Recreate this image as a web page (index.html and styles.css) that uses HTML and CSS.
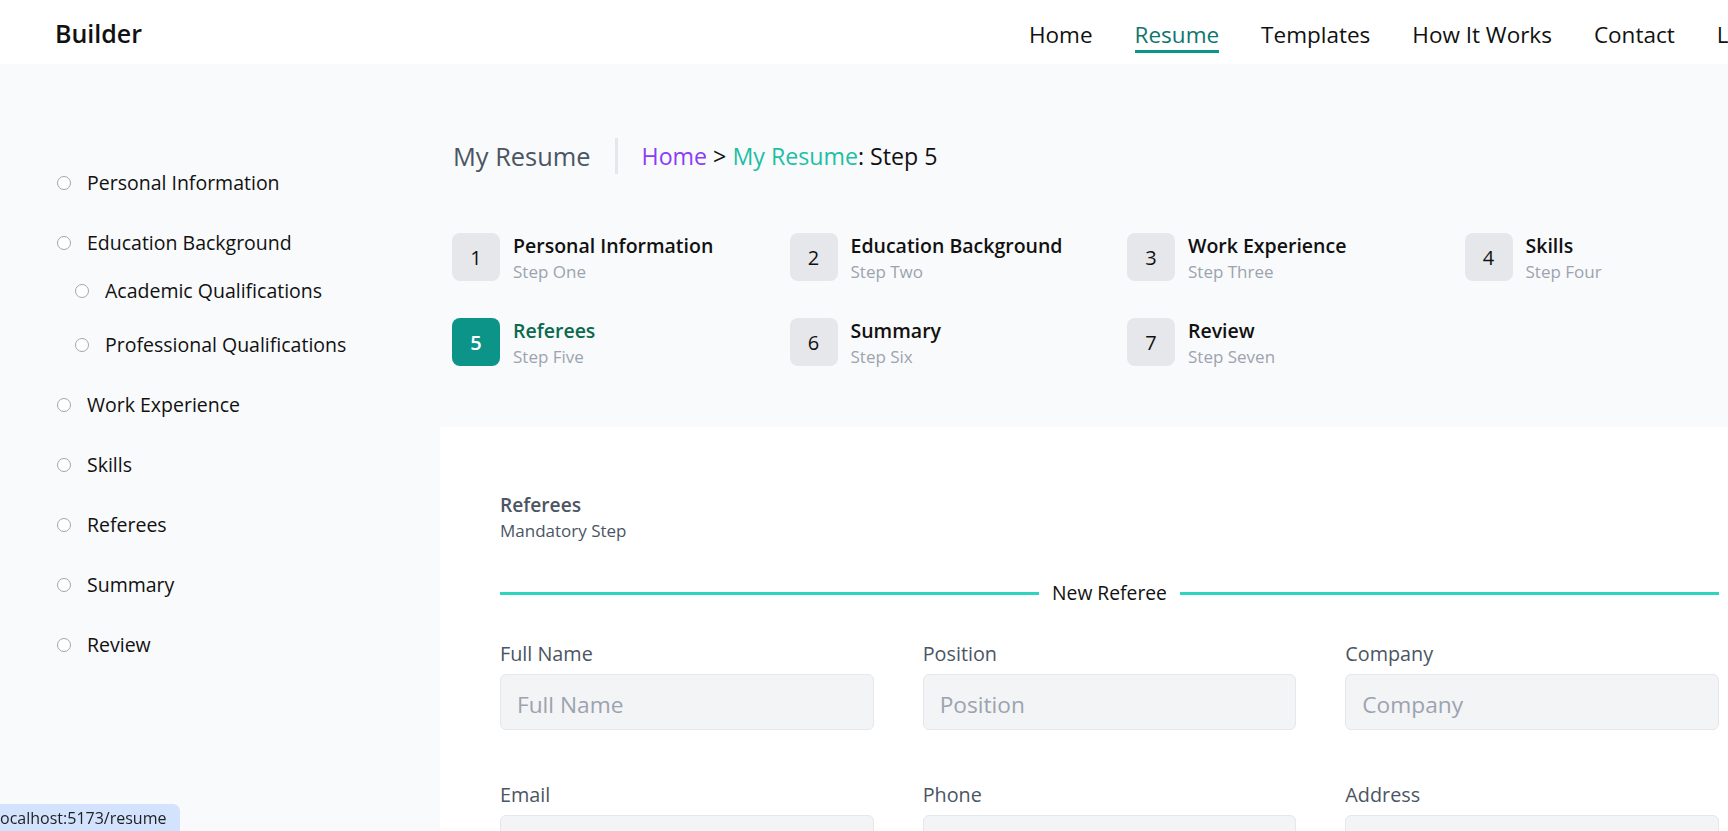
FILE: index.html
```html
<!DOCTYPE html>
<html lang="en">
<head>
<meta charset="utf-8">
<title>Resume Builder</title>
<link rel="stylesheet" href="styles.css">
</head>
<body>
<header class="topbar">
  <div class="brand">Builder</div>
  <nav class="nav">
    <a class="nav-link" href="#">Home</a>
    <a class="nav-link active" href="#">Resume</a>
    <a class="nav-link" href="#">Templates</a>
    <a class="nav-link" href="#">How It Works</a>
    <a class="nav-link" href="#">Contact</a>
    <a class="nav-link" href="#">Login</a>
  </nav>
</header>
<div class="layout">
  <aside class="sidebar">
    <ul class="toc">
      <li><div class="toc-row"><span class="dot"></span>Personal Information</div></li>
      <li><div class="toc-row"><span class="dot"></span>Education Background</div>
        <ul class="toc-sub">
          <li><div class="toc-row"><span class="dot"></span>Academic Qualifications</div></li>
          <li><div class="toc-row"><span class="dot"></span>Professional Qualifications</div></li>
        </ul>
      </li>
      <li><div class="toc-row"><span class="dot"></span>Work Experience</div></li>
      <li><div class="toc-row"><span class="dot"></span>Skills</div></li>
      <li><div class="toc-row"><span class="dot"></span>Referees</div></li>
      <li><div class="toc-row"><span class="dot"></span>Summary</div></li>
      <li><div class="toc-row"><span class="dot"></span>Review</div></li>
    </ul>
  </aside>
  <main class="main">
    <div class="crumbs">
      <span class="crumbs-title">My Resume</span>
      <span class="crumbs-sep"></span>
      <span class="crumbs-trail"><span class="purple">Home</span> &gt; <span class="teal">My Resume</span>: Step 5</span>
    </div>
    <ol class="steps">
      <li class="step"><span class="step-num">1</span><div><div class="step-title">Personal Information</div><div class="step-sub">Step One</div></div></li>
      <li class="step"><span class="step-num">2</span><div><div class="step-title">Education Background</div><div class="step-sub">Step Two</div></div></li>
      <li class="step"><span class="step-num">3</span><div><div class="step-title">Work Experience</div><div class="step-sub">Step Three</div></div></li>
      <li class="step"><span class="step-num">4</span><div><div class="step-title">Skills</div><div class="step-sub">Step Four</div></div></li>
      <li class="step current"><span class="step-num">5</span><div><div class="step-title">Referees</div><div class="step-sub">Step Five</div></div></li>
      <li class="step"><span class="step-num">6</span><div><div class="step-title">Summary</div><div class="step-sub">Step Six</div></div></li>
      <li class="step"><span class="step-num">7</span><div><div class="step-title">Review</div><div class="step-sub">Step Seven</div></div></li>
    </ol>
    <section class="panel">
      <div class="form-head">
        <h2>Referees</h2>
        <p>Mandatory Step</p>
      </div>
      <div class="divider">New Referee</div>
      <div class="fields">
        <div class="field"><label>Full Name</label><input type="text" placeholder="Full Name"></div>
        <div class="field"><label>Position</label><input type="text" placeholder="Position"></div>
        <div class="field"><label>Company</label><input type="text" placeholder="Company"></div>
        <div class="field"><label>Email</label><input type="text" placeholder="Email"></div>
        <div class="field"><label>Phone</label><input type="text" placeholder="Phone"></div>
        <div class="field"><label>Address</label><input type="text" placeholder="Address"></div>
      </div>
    </section>
  </main>
</div>
<div class="status"><span>localhost:5173/resume</span></div>
</body>
</html>
```
FILE: styles.css
```css
html {
  overflow: hidden;
}
body {
  margin: 0;
  width: 1779px;
  font-family: "Open Sans", "Noto Sans", sans-serif;
  color: #111;
  background: #f9fafb;
}

/* top bar */
.topbar {
  height: 64px;
  background: #fff;
  display: flex;
  align-items: flex-start;
  padding-left: 55px;
}
.brand {
  width: 974px;
  flex: none;
  font-size: 25px;
  font-weight: 600;
  line-height: 32px;
  padding-top: 17px;
}
.nav {
  display: flex;
  gap: 42px;
  flex: none;
}
.nav-link {
  display: block;
  padding-top: 19px;
  line-height: 31px;
  font-size: 22.5px;
  color: #111;
  text-decoration: none;
  border-bottom: 3px solid transparent;
  white-space: nowrap;
}
.nav-link.active {
  color: #0f766e;
  border-bottom-color: #0d9488;
}

/* layout */
.layout {
  display: flex;
}
.sidebar {
  width: 440px;
  flex: none;
  box-sizing: border-box;
  padding: 106px 0 0 57px;
}
.toc, .toc-sub {
  list-style: none;
  margin: 0;
  padding: 0;
}
.toc > li {
  margin-bottom: 34px;
}
.toc-sub {
  margin-top: 22px;
  padding-left: 18px;
}
.toc-sub > li + li {
  margin-top: 28px;
}
.toc-row {
  display: flex;
  align-items: center;
  gap: 16px;
  font-size: 19.5px;
  line-height: 26px;
  color: #111;
}
.dot {
  width: 14px;
  height: 14px;
  box-sizing: border-box;
  border: 1px solid #a1a6b0;
  border-radius: 50%;
  background: #fff;
  flex: none;
}

.main {
  width: 1339px;
  flex: none;
}

/* breadcrumb */
.crumbs {
  display: flex;
  align-items: center;
  height: 36px;
  margin: 74px 0 0 13px;
}
.crumbs-title {
  font-size: 25.4px;
  color: #4b5563;
}
.crumbs-sep {
  width: 3px;
  align-self: stretch;
  background: #e5e7eb;
  margin: 0 24px;
}
.crumbs-trail {
  font-size: 23.2px;
  color: #111;
}
.purple { color: #8b3cf4; }
.teal { color: #1dbfa5; }

/* steps */
.steps {
  list-style: none;
  margin: 59px 12px 0 12px;
  padding: 0;
  display: grid;
  grid-template-columns: repeat(4, 1fr);
  column-gap: 35px;
  row-gap: 34px;
}
.step {
  display: flex;
  gap: 13px;
}
.step-num {
  width: 48px;
  height: 48px;
  flex: none;
  border-radius: 8px;
  background: #e5e7eb;
  display: flex;
  align-items: center;
  justify-content: center;
  font-size: 20px;
  font-weight: 500;
  color: #111;
}
.step-title {
  font-size: 19.5px;
  font-weight: 600;
  line-height: 26px;
  color: #111;
}
.step-sub {
  font-size: 17px;
  line-height: 24px;
  margin-top: 1px;
  color: #9ca3af;
}
.step.current .step-num {
  background: #0d9488;
  color: #fff;
  font-weight: 600;
}
.step.current .step-title {
  color: #0b6a4d;
}

/* panel */
.panel {
  margin-top: 58px;
  background: #fff;
  padding: 66px 60px 60px 60px;
}
.form-head h2 {
  margin: 0;
  font-size: 19.2px;
  font-weight: 600;
  line-height: 24px;
  color: #4b5563;
}
.form-head p {
  margin: 3px 0 0;
  font-size: 17px;
  line-height: 22px;
  color: #4b5563;
}
.divider {
  display: flex;
  align-items: center;
  gap: 13px;
  margin-top: 37px;
  font-size: 19.3px;
  line-height: 28px;
  color: #111;
}
.divider::before,
.divider::after {
  content: "";
  flex: 1;
  height: 3px;
  background: #2dd4bf;
}
.fields {
  display: grid;
  grid-template-columns: repeat(3, 1fr);
  column-gap: 49px;
  row-gap: 52px;
  margin-top: 34px;
}
.field label {
  display: block;
  font-size: 19.8px;
  line-height: 26px;
  color: #4b5563;
  margin-bottom: 7px;
}
.field input {
  display: block;
  width: 100%;
  height: 56px;
  box-sizing: border-box;
  border: 1px solid #e5e7eb;
  border-radius: 6px;
  background: #f3f4f6;
  padding: 4px 16px 0;
  font-family: inherit;
  font-size: 22.7px;
  color: #111;
  outline: none;
}
.field input::placeholder {
  color: #9ca3af;
}

/* browser status bubble */
.status {
  position: fixed;
  left: 0;
  bottom: 0;
  width: 180px;
  height: 27px;
  overflow: hidden;
  background: #d3e3fd;
  border-top-right-radius: 7px;
  font-size: 16px;
  line-height: 28px;
  color: #1f1f1f;
  white-space: nowrap;
}
.status span {
  display: block;
  margin-left: -4px;
}
```
